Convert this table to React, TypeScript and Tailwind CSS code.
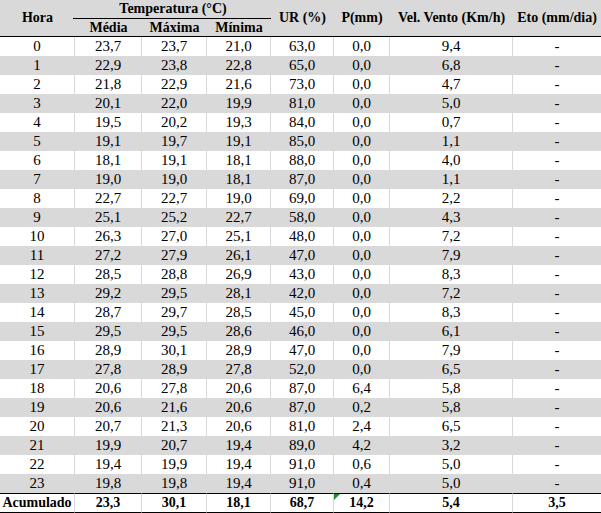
import React from "react";

const rows: string[][] = [
  ["0", "23,7", "23,7", "21,0", "63,0", "0,0", "9,4"],
  ["1", "22,9", "23,8", "22,8", "65,0", "0,0", "6,8"],
  ["2", "21,8", "22,9", "21,6", "73,0", "0,0", "4,7"],
  ["3", "20,1", "22,0", "19,9", "81,0", "0,0", "5,0"],
  ["4", "19,5", "20,2", "19,3", "84,0", "0,0", "0,7"],
  ["5", "19,1", "19,7", "19,1", "85,0", "0,0", "1,1"],
  ["6", "18,1", "19,1", "18,1", "88,0", "0,0", "4,0"],
  ["7", "19,0", "19,0", "18,1", "87,0", "0,0", "1,1"],
  ["8", "22,7", "22,7", "19,0", "69,0", "0,0", "2,2"],
  ["9", "25,1", "25,2", "22,7", "58,0", "0,0", "4,3"],
  ["10", "26,3", "27,0", "25,1", "48,0", "0,0", "7,2"],
  ["11", "27,2", "27,9", "26,1", "47,0", "0,0", "7,9"],
  ["12", "28,5", "28,8", "26,9", "43,0", "0,0", "8,3"],
  ["13", "29,2", "29,5", "28,1", "42,0", "0,0", "7,2"],
  ["14", "28,7", "29,7", "28,5", "45,0", "0,0", "8,3"],
  ["15", "29,5", "29,5", "28,6", "46,0", "0,0", "6,1"],
  ["16", "28,9", "30,1", "28,9", "47,0", "0,0", "7,9"],
  ["17", "27,8", "28,9", "27,8", "52,0", "0,0", "6,5"],
  ["18", "20,6", "27,8", "20,6", "87,0", "6,4", "5,8"],
  ["19", "20,6", "21,6", "20,6", "87,0", "0,2", "5,8"],
  ["20", "20,7", "21,3", "20,6", "81,0", "2,4", "6,5"],
  ["21", "19,9", "20,7", "19,4", "89,0", "4,2", "3,2"],
  ["22", "19,4", "19,9", "19,4", "91,0", "0,6", "5,0"],
  ["23", "19,8", "19,8", "19,4", "91,0", "0,4", "5,0"],
];

const footer = ["Acumulado", "23,3", "30,1", "18,1", "68,7", "14,2", "5,4", "3,5"];

export default function App() {
  return (
    <div className="w-[601px] h-[513px] bg-white overflow-hidden font-[Liberation_Serif,serif] text-black">
      <table className="w-[601px] table-fixed border-separate border-spacing-0 font-[Liberation_Serif,serif]">
        <colgroup>
          <col className="w-[75px]" />
          <col className="w-[67px]" />
          <col className="w-[65px]" />
          <col className="w-[64px]" />
          <col className="w-[63px]" />
          <col className="w-[56px]" />
          <col className="w-[123px]" />
          <col className="w-[88px]" />
        </colgroup>
        <thead className="bg-[#d9d9d9] text-[14px] font-bold">
          <tr className="h-[19px]">
            <th rowSpan={2} className="p-0 leading-none text-center align-middle border-b border-black">Hora</th>
            <th colSpan={3} className="p-0 leading-none text-center align-middle">
              <div className="flex h-[19px] flex-col">
                <div className="flex flex-1 items-center justify-center">Temperatura (°C)</div>
                <div className="ml-[-2px] h-px bg-black" />
              </div>
            </th>
            <th rowSpan={2} className="p-0 leading-none text-center align-middle border-b border-black">UR (%)</th>
            <th rowSpan={2} className="p-0 leading-none text-center align-middle border-b border-black">P(mm)</th>
            <th rowSpan={2} className="p-0 leading-none text-center align-middle border-b border-black">Vel. Vento (Km/h)</th>
            <th rowSpan={2} className="p-0 leading-none text-center align-middle border-b border-black">Eto (mm/dia)</th>
          </tr>
          <tr className="h-[18px]">
            <th className="p-0 leading-none text-center align-middle border-b border-black">Média</th>
            <th className="p-0 leading-none text-center align-middle border-b border-black">Máxima</th>
            <th className="p-0 leading-none text-center align-middle border-b border-black">Mínima</th>
          </tr>
        </thead>
        <tbody className="text-[15px]">
          {rows.map((r, i) => (
            <tr key={r[0]} className={i % 2 === 0 ? "h-[19px] bg-white" : "h-[19px] bg-[#d9d9d9]"}>
              {r.map((v, j) => (
                <td key={j} className="p-0 leading-none text-center align-middle border-r border-[#d9d9d9]">
                  {v}
                </td>
              ))}
              <td className="p-0 leading-none text-center align-middle">-</td>
            </tr>
          ))}
        </tbody>
        <tfoot className="text-[14px] font-bold">
          <tr className="h-[20px] bg-white">
            {footer.map((v, j) => (
              <td
                key={j}
                className={
                  j === 5
                    ? "relative p-0 leading-none text-center align-middle border-t border-b border-r border-t-black border-b-black border-r-[#d9d9d9]"
                    : j === 7
                    ? "p-0 leading-none text-center align-middle border-t border-b border-black"
                    : "p-0 leading-none text-center align-middle border-t border-b border-r border-t-black border-b-black border-r-[#d9d9d9]"
                }
              >
                {j === 5 && (
                  <span className="absolute left-0 top-0 h-0 w-0 border-t-[6px] border-r-[6px] border-t-[#1f8a2e] border-r-transparent" />
                )}
                {v}
              </td>
            ))}
          </tr>
        </tfoot>
      </table>
    </div>
  );
}
